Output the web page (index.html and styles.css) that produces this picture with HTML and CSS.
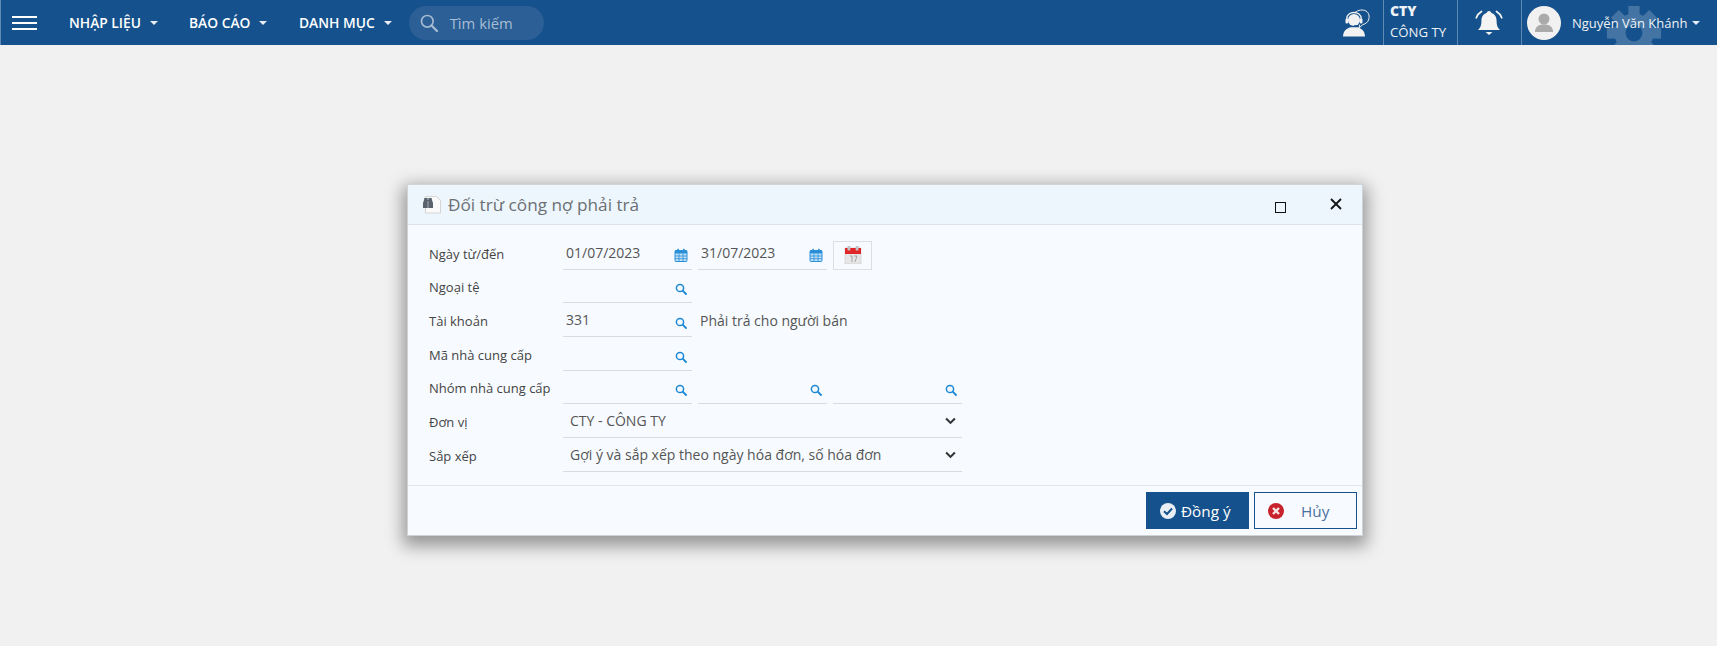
FILE: index.html
```html
<!DOCTYPE html>
<html lang="vi">
<head>
<meta charset="utf-8">
<title>Đối trừ công nợ phải trả</title>
<link rel="stylesheet" href="styles.css">
</head>
<body>
<svg class="sprites" width="0" height="0" aria-hidden="true">
  <symbol id="mag" viewBox="0 0 12 12"><circle cx="5" cy="5" r="3.6" fill="none" stroke="#1b87d6" stroke-width="1.5"/><path d="M7.7 7.7 11 11" stroke="#1b87d6" stroke-width="1.8" stroke-linecap="round"/></symbol>
  <symbol id="cal" viewBox="0 0 14 14"><rect x="1" y="2.5" width="12" height="11" rx="1" fill="#bfe0f7" stroke="#2b8fd8"/><rect x="1" y="2.5" width="12" height="3" fill="#2b8fd8"/><path d="M1 8h12M1 10.7h12M5 5.5v8M9 5.5v8" stroke="#2b8fd8" stroke-width=".8"/><rect x="3.3" y=".8" width="1.6" height="3" fill="#2b8fd8"/><rect x="9.1" y=".8" width="1.6" height="3" fill="#2b8fd8"/></symbol>
  <symbol id="chev" viewBox="0 0 10 7"><path d="M1 1.2 5 5.2 9 1.2" fill="none" stroke="#333" stroke-width="1.9"/></symbol>
</svg>

<header class="topbar">
  <button class="burger" aria-label="Menu"><i></i><i></i><i></i></button>
  <nav class="menu">
    <a class="menu-item">NHẬP LIỆU<b class="caret"></b></a>
    <a class="menu-item">BÁO CÁO<b class="caret"></b></a>
    <a class="menu-item">DANH MỤC<b class="caret"></b></a>
  </nav>
  <div class="search">
    <svg class="search-icon" viewBox="0 0 18 18"><circle cx="7.3" cy="7.3" r="5.8" fill="none" stroke="#a3b9d1" stroke-width="1.7"/><path d="M11.5 11.5 17 17" stroke="#a3b9d1" stroke-width="2.4" stroke-linecap="round"/></svg>
    <span>Tìm kiếm</span>
  </div>
  <div class="top-right">
    <svg class="gear" viewBox="0 0 60 60">
      <g opacity=".2" fill="#fff">
        <circle cx="30" cy="30" r="15" fill="none" stroke="#fff" stroke-width="12"/>
        <rect x="24" y="1" width="12" height="12"/>
        <rect x="24" y="1" width="12" height="12" transform="rotate(45 30 30)"/>
        <rect x="24" y="1" width="12" height="12" transform="rotate(90 30 30)"/>
        <rect x="24" y="1" width="12" height="12" transform="rotate(135 30 30)"/>
        <rect x="24" y="1" width="12" height="12" transform="rotate(180 30 30)"/>
        <rect x="24" y="1" width="12" height="12" transform="rotate(225 30 30)"/>
        <rect x="24" y="1" width="12" height="12" transform="rotate(270 30 30)"/>
        <rect x="24" y="1" width="12" height="12" transform="rotate(315 30 30)"/>
      </g>
    </svg>
    <div class="cell cell-support">
      <svg class="support" viewBox="0 0 28 28">
        <path d="M13 3.500C16 .8 21 .3 24 2c3 1.800 3.800 5.500 2.500 9-.9 2.400-3 4-5.500 4.500L17 19l.7-3.500" fill="none" stroke="#f0f0f0" stroke-width="1"/>
        <circle cx="12" cy="11" r="6" fill="#f2f2f2"/>
        <path d="M4.800 12V9.500c0-8 14.400-8 14.400 0V12" fill="none" stroke="#f2f2f2" stroke-width="1.300"/>
        <rect x="3.500" y="9.500" width="2.800" height="5" rx="1.200" fill="#f2f2f2"/>
        <rect x="17.700" y="9.500" width="2.800" height="5" rx="1.200" fill="#f2f2f2"/>
        <path d="M1 27.500c0-5.500 3.500-8 7.500-9.300h7c4 1.300 7.500 3.800 7.500 9.300z" fill="#f2f2f2"/>
        <path d="M12 16.500h5" stroke="#15518c" stroke-width=".8"/>
      </svg>
    </div>
    <div class="cell cell-company"><strong>CTY</strong><span>CÔNG TY</span></div>
    <div class="cell cell-bell">
      <svg class="bell" viewBox="0 0 28 28"><path d="M14 2c1.500 0 2.300 1 2.400 2C20 5 21.600 8 21.600 12c0 5 1.400 7 3.400 9H3c2-2 3.400-4 3.400-9 0-4 1.600-7 5.200-8 .1-1 .9-2 2.400-2z" fill="#f4f4f4"/><path d="M10.500 23h7L14 26z" fill="#f4f4f4"/><path d="M6.500 2.500C4 4 2.300 6 1.300 8.700M21.500 2.500C24 4 25.700 6 26.700 8.700" fill="none" stroke="#f4f4f4" stroke-width="1.800" stroke-linecap="round"/></svg>
    </div>
    <div class="cell cell-user">
      <span class="avatar"><svg viewBox="0 0 34 34"><circle cx="17" cy="13" r="5.500" fill="#aaa"/><path d="M8 26c0-5 3-7.500 9-7.500s9 2.500 9 7.500z" fill="#aaa"/></svg></span>
      <span class="user-name">Nguyễn Văn Khánh</span><b class="caret caret-user"></b>
    </div>
  </div>
</header>

<main class="stage">
  <section class="dialog">
    <div class="dialog-head">
      <svg class="doc-icon" viewBox="0 0 18 18">
        <path d="M2.500.5h11l4 4v12.500h-15z" fill="#fafafa" stroke="#d4d4d4"/>
        <path d="M0 12V7l1.200-3.500V2h3.500v2h.6V2h3.500v1.500L10 7v5H0z" fill="#59636d"/>
        <path d="M5 5v7" stroke="#c7ccd1" stroke-width=".7"/>
      </svg>
      <h2 class="dialog-title">Đối trừ công nợ phải trả</h2>
      <span class="win-max"></span>
      <svg class="win-close" viewBox="0 0 12 12"><path d="M1 1l10 10M11 1 1 11" stroke="#111" stroke-width="1.800"/></svg>
    </div>

    <div class="form">
      <div class="row">
        <label class="lbl">Ngày từ/đến</label>
        <div class="fld"><span class="val">01/07/2023</span><svg class="ic-cal"><use href="#cal"/></svg></div>
        <div class="fld"><span class="val">31/07/2023</span><svg class="ic-cal"><use href="#cal"/></svg></div>
        <div class="cal-btn">
          <svg viewBox="0 0 18 18"><rect x="1" y="2" width="16" height="16" fill="#e6e6e6" stroke="#c9c9c9" stroke-width=".6"/><rect x="1" y="2" width="16" height="6" fill="#e02626"/><rect x="3.500" y="0" width="2.800" height="4.500" fill="#c2c2c2"/><rect x="11.700" y="0" width="2.800" height="4.500" fill="#c2c2c2"/><path d="M6 10h2v6M10 10h3l-2 6" fill="none" stroke="#a5a5a5" stroke-width="1"/></svg>
        </div>
      </div>
      <div class="row">
        <label class="lbl">Ngoại tệ</label>
        <div class="fld"><svg class="ic-mag"><use href="#mag"/></svg></div>
      </div>
      <div class="row">
        <label class="lbl">Tài khoản</label>
        <div class="fld"><span class="val">331</span><svg class="ic-mag"><use href="#mag"/></svg></div>
        <span class="note">Phải trả cho người bán</span>
      </div>
      <div class="row">
        <label class="lbl">Mã nhà cung cấp</label>
        <div class="fld"><svg class="ic-mag"><use href="#mag"/></svg></div>
      </div>
      <div class="row">
        <label class="lbl">Nhóm nhà cung cấp</label>
        <div class="fld"><svg class="ic-mag"><use href="#mag"/></svg></div>
        <div class="fld"><svg class="ic-mag"><use href="#mag"/></svg></div>
        <div class="fld"><svg class="ic-mag"><use href="#mag"/></svg></div>
      </div>
      <div class="row">
        <label class="lbl">Đơn vị</label>
        <div class="fld fld-wide"><span class="val val-sel">CTY - CÔNG TY</span><svg class="ic-chev"><use href="#chev"/></svg></div>
      </div>
      <div class="row">
        <label class="lbl">Sắp xếp</label>
        <div class="fld fld-wide"><span class="val val-sel">Gợi ý và sắp xếp theo ngày hóa đơn, số hóa đơn</span><svg class="ic-chev"><use href="#chev"/></svg></div>
      </div>
    </div>

    <div class="dialog-foot">
      <button class="btn btn-ok">
        <svg viewBox="0 0 16 16"><circle cx="8" cy="8" r="8" fill="#e9eef4"/><path d="M4 8.200 7 11l5-5.500" fill="none" stroke="#15518c" stroke-width="2"/></svg>
        <span>Đồng ý</span>
      </button>
      <button class="btn btn-cancel">
        <svg viewBox="0 0 16 16"><circle cx="8" cy="8" r="8" fill="#c8232c"/><path d="M5 5l6 6M11 5l-6 6" stroke="#f6e4e4" stroke-width="2.400"/></svg>
        <span>Hủy</span>
      </button>
    </div>
  </section>
</main>
</body>
</html>
```

FILE: styles.css
```css
* { box-sizing: border-box; }
html, body { margin: 0; padding: 0; height: 100%; }
body {
  background: #f1f1f1;
  font-family: "Open Sans", "Noto Sans", "Liberation Sans", sans-serif;
  color: #444;
  overflow: hidden;
}
.sprites { position: absolute; }

/* top bar */
.topbar {
  height: 45px;
  background: #15518c;
  border-left: 1px solid #5f8ab4;
  display: flex;
  align-items: center;
  overflow: hidden;
}
.burger {
  width: 25px;
  height: 14px;
  margin-left: 11px;
  padding: 0;
  border: 0;
  background: none;
  display: flex;
  flex-direction: column;
  justify-content: space-between;
}
.burger i { display: block; height: 2px; background: #fff; }
.menu { display: flex; margin-left: 32px; }
.menu-item {
  display: flex;
  align-items: center;
  color: #fff;
  font-size: 13.8px;
  font-weight: 600;
  white-space: nowrap;
}
.menu-item:nth-child(1) { width: 120px; }
.menu-item:nth-child(2) { width: 110px; }
.caret {
  width: 0;
  height: 0;
  margin-left: 9px;
  border-left: 4px solid transparent;
  border-right: 4px solid transparent;
  border-top: 4px solid #e8eef4;
}
.search {
  width: 135px;
  height: 34px;
  margin-left: 17px;
  padding-left: 11px;
  border-radius: 17px;
  background: #2b5f95;
  display: flex;
  align-items: center;
  color: #a9bdd3;
  font-size: 14.8px;
}
.search-icon { width: 18px; height: 18px; margin-right: 12px; }

.top-right {
  position: relative;
  margin-left: auto;
  height: 45px;
  display: flex;
}
.gear {
  position: absolute;
  right: 55px;
  top: 5px;
  width: 56px;
  height: 56px;
}
.cell { height: 45px; display: flex; align-items: center; border-right: 1px solid #5f8ab4; }
.cell-support { width: 48px; justify-content: flex-start; padding-left: 6px; }
.support { width: 28px; height: 28px; }
.cell-company {
  width: 74px;
  padding-left: 6px;
  flex-direction: column;
  align-items: flex-start;
  justify-content: flex-start;
  color: #eef2f6;
  font-size: 13.2px;
}
.cell-company strong { line-height: 14px; margin-top: 4px; font-size: 14px; font-weight: 800; }
.cell-company span { line-height: 18px; margin-top: 5px; }
.cell-bell { width: 64px; padding-left: 17px; }
.bell { width: 28px; height: 28px; }
.cell-user { width: 195px; border-right: 0; position: relative; }
.avatar {
  width: 34px;
  height: 34px;
  margin-left: 5px;
  border-radius: 50%;
  background: #f1f1f1;
  display: block;
}
.avatar svg { display: block; width: 34px; height: 34px; }
.user-name { margin-left: 11px; color: #eef2f6; font-size: 13px; white-space: nowrap; }
.caret-user { margin-left: 5px; }

/* dialog */
.stage { display: flex; padding: 139px 0 0 407px; }
.dialog {
  width: 956px;
  height: 352px;
  background: #f7fbff;
  border: 1px solid #cfd3d6;
  box-shadow: 0 6px 16px 4px rgba(0, 0, 0, .38);
  display: flex;
  flex-direction: column;
}
.dialog-head {
  height: 40px;
  flex: none;
  background: #edf6fd;
  border-bottom: 1px solid #dde3e8;
  display: flex;
  align-items: center;
  padding-left: 15px;
}
.doc-icon { width: 18px; height: 18px; margin-right: 7px; flex: none; }
.dialog-title {
  margin: 0;
  flex: 1;
  color: #6c6f73;
  font-size: 17.2px;
  font-weight: 400;
}
.win-max {
  width: 11px;
  height: 11px;
  margin-top: 5px;
  margin-right: 44px;
  border: 1px solid #111;
}
.win-close { width: 12px; height: 12px; margin-right: 20px; margin-top: -1px; }

.form { padding-top: 11px; flex: 1; }
.row { display: flex; height: 33.67px; align-items: flex-end; }
.lbl {
  width: 134px;
  margin-left: 21px;
  padding-bottom: 7px;
  font-size: 13px;
  color: #444;
  white-space: nowrap;
  align-self: flex-end;
}
.fld {
  width: 129px;
  height: 30px;
  margin-right: 6px;
  border-bottom: 1px solid #d8dcdf;
  display: flex;
  align-items: center;
  justify-content: space-between;
  padding: 0 4px 3px 3px;
  font-size: 14px;
}
.fld-wide { width: 399px; margin-right: 0; padding: 0 4px 3px 7px; }
.val { color: #555; white-space: nowrap; }
.val-sel { flex: 1; }
.fld svg { margin-left: auto; flex: none; }
.ic-cal { width: 14px; height: 14px; margin-top: 4px; }
.ic-mag { width: 12px; height: 12px; margin-right: 1px; margin-top: 6px; }
.ic-chev { width: 11px; height: 8px; margin-right: 2px; }
.note { font-size: 14px; color: #555; padding-bottom: 7px; margin-left: 2px; white-space: nowrap; }
.cal-btn {
  width: 39px;
  height: 29px;
  border: 1px solid #dde0e3;
  display: flex;
  align-items: center;
  justify-content: center;
}
.cal-btn svg { width: 18px; height: 18px; }

.dialog-foot {
  height: 50px;
  flex: none;
  border-top: 1px solid #e3e7ea;
  display: flex;
  justify-content: flex-end;
  gap: 5px;
  padding: 6px 5px 0 0;
}
.btn {
  width: 103px;
  height: 37px;
  padding: 0;
  border: 1px solid #15518c;
  font-family: inherit;
  font-size: 15.3px;
  display: flex;
  align-items: center;
}
.btn-ok { background: #15518c; color: #fff; padding-left: 13px; }
.btn-ok svg { width: 16px; height: 16px; margin-right: 5px; }
.btn-cancel { background: #f7fbff; color: #4a6f9c; padding-left: 13px; }
.btn-cancel svg { width: 16px; height: 16px; margin-right: 17px; }
```
